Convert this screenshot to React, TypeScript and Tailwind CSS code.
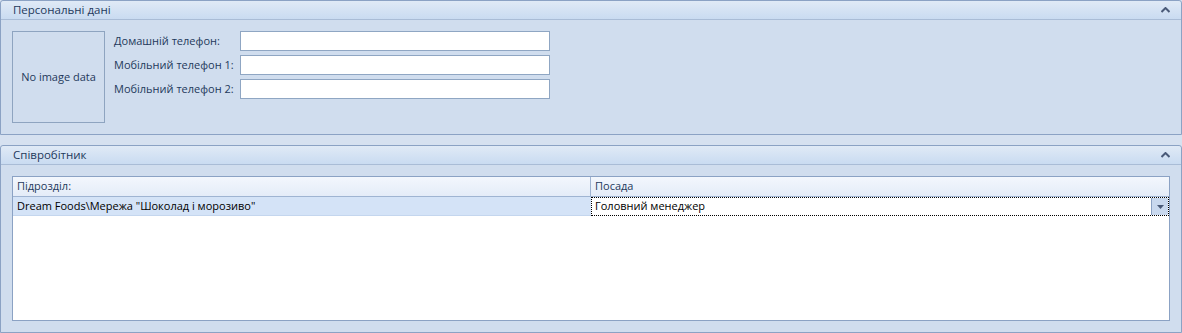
import React from 'react';

const font = { fontFamily: '"Open Sans", "Noto Sans", sans-serif' };

const Chevron = () => (
  <svg width="9" height="6" viewBox="0 0 9 6" className="shrink-0">
    <path d="M0.5 5 L4.5 1 L8.5 5" fill="none" stroke="#4a5a78" strokeWidth="2" />
  </svg>
);

const GroupHeader: React.FC<{ title: string }> = ({ title }) => (
  <div className="h-[19px] flex items-center justify-between pl-[12px] pr-[11px] border-b border-[#a9bcd6] bg-gradient-to-b from-[#e0eaf6] to-[#c9dbf1] rounded-t-[3px]">
    <span className="text-[11.5px] text-[#1e395b] leading-none">{title}</span>
    <Chevron />
  </div>
);

const Field: React.FC<{ label: string }> = ({ label }) => (
  <div className="flex items-center h-[20px]">
    <span className="w-[126px] text-[11px] text-[#1e395b] whitespace-nowrap">{label}</span>
    <div className="w-[310px] h-[20px] bg-white border border-[#8fa6c3]" />
  </div>
);

export default function App() {
  return (
    <div className="w-[1182px] h-[333px] bg-[#d6e1f0] flex flex-col" style={font}>
      {/* Персональні дані */}
      <div className="h-[135px] border border-[#8ba2c4] rounded-t-[3px] bg-[#d0ddee] flex flex-col shrink-0">
        <GroupHeader title="Персональні дані" />
        <div className="flex pl-[11px] pt-[11px] gap-[9px]">
          <div className="w-[93px] h-[92px] border border-[#8ea4c0] flex items-center justify-center text-[11px] text-[#1e395b]">
            No image data
          </div>
          <div className="flex flex-col gap-[4px]">
            <Field label="Домашній телефон:" />
            <Field label="Мобільний телефон 1:" />
            <Field label="Мобільний телефон 2:" />
          </div>
        </div>
      </div>

      <div className="h-[10px] shrink-0" />

      {/* Співробітник */}
      <div className="h-[188px] border border-[#8ba2c4] rounded-t-[3px] bg-[#d0ddee] flex flex-col shrink-0">
        <GroupHeader title="Співробітник" />
        <div className="flex-1 pl-[11px] pr-[11px] pt-[11px] pb-[11px]">
          <div className="h-full border border-[#8ba2c4] bg-white flex flex-col">
            <div className="h-[20px] flex border-b border-[#9fb4d2] bg-gradient-to-b from-[#f3f7fd] to-[#e4ecf8] text-[11px] text-[#1e395b]">
              <div className="w-[578px] border-r border-[#9fb4d2] pl-[4px] flex items-center">Підрозділ:</div>
              <div className="flex-1 pl-[4px] flex items-center">Посада</div>
            </div>
            <div className="h-[19px] flex text-[11px] text-black">
              <div className="w-[578px] bg-[#d4e3f7] pl-[4px] flex items-center whitespace-nowrap border-b border-[#c4d6ee]">
                Dream Foods\Мережа "Шоколад і морозиво"
              </div>
              <div className="flex-1 flex border border-dotted border-black">
                <div className="flex-1 pl-[3px] flex items-center">Головний менеджер</div>
                <div className="w-[17px] bg-[#c8d8ee] border-l border-[#8ba2c4] flex items-center justify-center">
                  <svg width="7" height="4" viewBox="0 0 7 4">
                    <path d="M0 0 H7 L3.5 4 Z" fill="#4a5a78" />
                  </svg>
                </div>
              </div>
            </div>
            <div className="flex-1" />
          </div>
        </div>
      </div>
    </div>
  );
}
